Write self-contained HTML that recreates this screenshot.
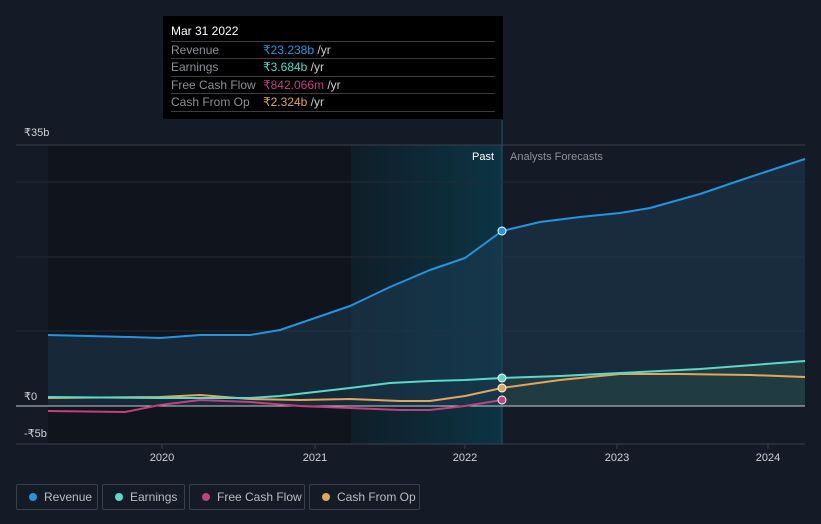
<!DOCTYPE html><html><head><style>
body{margin:0;background:#151b26;width:821px;height:524px;overflow:hidden;font-family:"Liberation Sans",sans-serif;position:relative}
.tt{position:absolute;left:163px;top:16px;width:340px;height:103px;background:#000;color:#fff;font-size:12px}
.tt .h{position:absolute;left:8px;top:8px}
.row{position:absolute;left:8px;width:324px;border-top:1px solid #3a3d42;height:17px;line-height:17px;color:#8d9097}
.row span{position:absolute;left:92px}
.lg{position:absolute;top:484px;height:26px;border:1px solid #3a404b;border-radius:2px;color:#b9bcc2;font-size:12px;line-height:24px;box-sizing:border-box}
.lg i{position:absolute;left:12px;top:8px;width:8px;height:8px;border-radius:50%}
.lg b{font-weight:normal;position:absolute;left:27px}
</style></head><body>
<svg width="821" height="524" style="position:absolute;left:0;top:0">
<defs><linearGradient id="g" x1="0" x2="1"><stop offset="0" stop-color="#0f1e28"/><stop offset="1" stop-color="#0c3444"/></linearGradient></defs>
<rect x="48" y="145" width="454" height="299" fill="#10141c"/>
<rect x="351" y="145" width="151" height="299" fill="url(#g)"/>
<line x1="502" y1="120" x2="502" y2="444" stroke="#1b5a6a"/>
<g stroke="#232a34"><line x1="16" y1="145" x2="805" y2="145" stroke="#3a404a"/><line x1="16" y1="182" x2="805" y2="182"/><line x1="16" y1="257" x2="805" y2="257"/><line x1="16" y1="331" x2="805" y2="331"/></g>
<g stroke="#3a404a"><line x1="16" y1="444" x2="805" y2="444"/><line x1="162" y1="444" x2="162" y2="449"/><line x1="315" y1="444" x2="315" y2="449"/><line x1="465" y1="444" x2="465" y2="449"/><line x1="617" y1="444" x2="617" y2="449"/><line x1="768" y1="444" x2="768" y2="449"/></g>
<path d="M48,335 L130,337 160,338 200,335 250,335 280,330 315,318 350,306 390,287 430,270 465,258 502,231 540,222 580,217 620,213 650,208 700,194 750,177 805,159 L805,406 48,406Z" fill="#1e3a52" fill-opacity="0.55"/>
<path d="M502,378 L560,376 620,373 700,369 805,361 805,406 502,406Z" fill="#2a4a48" fill-opacity="0.5"/>
<line x1="16" y1="406" x2="805" y2="406" stroke="#c8ccd2"/>
<g fill="none" stroke-width="2" stroke-linejoin="round">
<path d="M48,411 L125,412 160,405 200,400 250,402 300,406 350,408 400,410 430,410 465,406 502,400" stroke="#c0417f"/>
<path d="M48,398 L160,397 200,395 250,399 300,400 350,399 400,401 430,401 465,396 502,388 560,380 620,374 680,374 750,375 805,377" stroke="#e0a85a"/>
<path d="M48,397 L160,398 250,398 280,396 315,392 350,388 390,383 430,381 465,380 502,378 560,376 620,373 700,369 805,361" stroke="#5ad8c8"/>
<path d="M48,335 L130,337 160,338 200,335 250,335 280,330 315,318 350,306 390,287 430,270 465,258 502,231 540,222 580,217 620,213 650,208 700,194 750,177 805,159" stroke="#2394e0"/>
</g>
<circle cx="502" cy="231" r="4" fill="#2394e0" stroke="#fff"/>
<circle cx="502" cy="378" r="4" fill="#5ad8c8" stroke="#fff"/>
<circle cx="502" cy="388" r="4" fill="#e0a85a" stroke="#fff"/>
<circle cx="502" cy="400" r="4" fill="#c0417f" stroke="#fff"/>
<g font-family="Liberation Sans" font-size="11" fill="#d0d3d8">
<text x="24" y="136">₹35b</text><text x="24" y="400">₹0</text><text x="24" y="437">-₹5b</text>
<text x="162" y="461" text-anchor="middle">2020</text><text x="315" y="461" text-anchor="middle">2021</text><text x="465" y="461" text-anchor="middle">2022</text><text x="617" y="461" text-anchor="middle">2023</text><text x="768" y="461" text-anchor="middle">2024</text>
<text x="494" y="160" text-anchor="end" fill="#fff">Past</text><text x="510" y="160" fill="#8d9097">Analysts Forecasts</text>
</g></svg>
<div class="tt"><div class="h">Mar 31 2022</div>
<div class="row" style="top:25px">Revenue<span style="color:#2394e0">₹23.238b <em style="font-style:normal;color:#ccc">/yr</em></span></div>
<div class="row" style="top:42px">Earnings<span style="color:#5ad8c8">₹3.684b <em style="font-style:normal;color:#ccc">/yr</em></span></div>
<div class="row" style="top:60px">Free Cash Flow<span style="color:#c0417f">₹842.066m <em style="font-style:normal;color:#ccc">/yr</em></span></div>
<div class="row" style="top:77px">Cash From Op<span style="color:#e0a85a">₹2.324b <em style="font-style:normal;color:#ccc">/yr</em></span></div>
<div class="row" style="top:95px;height:0"></div></div>
<div class="lg" style="left:16px;width:82px"><i style="background:#2394e0"></i><b>Revenue</b></div>
<div class="lg" style="left:102px;width:83px"><i style="background:#5ad8c8"></i><b>Earnings</b></div>
<div class="lg" style="left:189px;width:116px"><i style="background:#c0417f"></i><b>Free Cash Flow</b></div>
<div class="lg" style="left:309px;width:111px"><i style="background:#e0a85a"></i><b>Cash From Op</b></div>
</body></html>
